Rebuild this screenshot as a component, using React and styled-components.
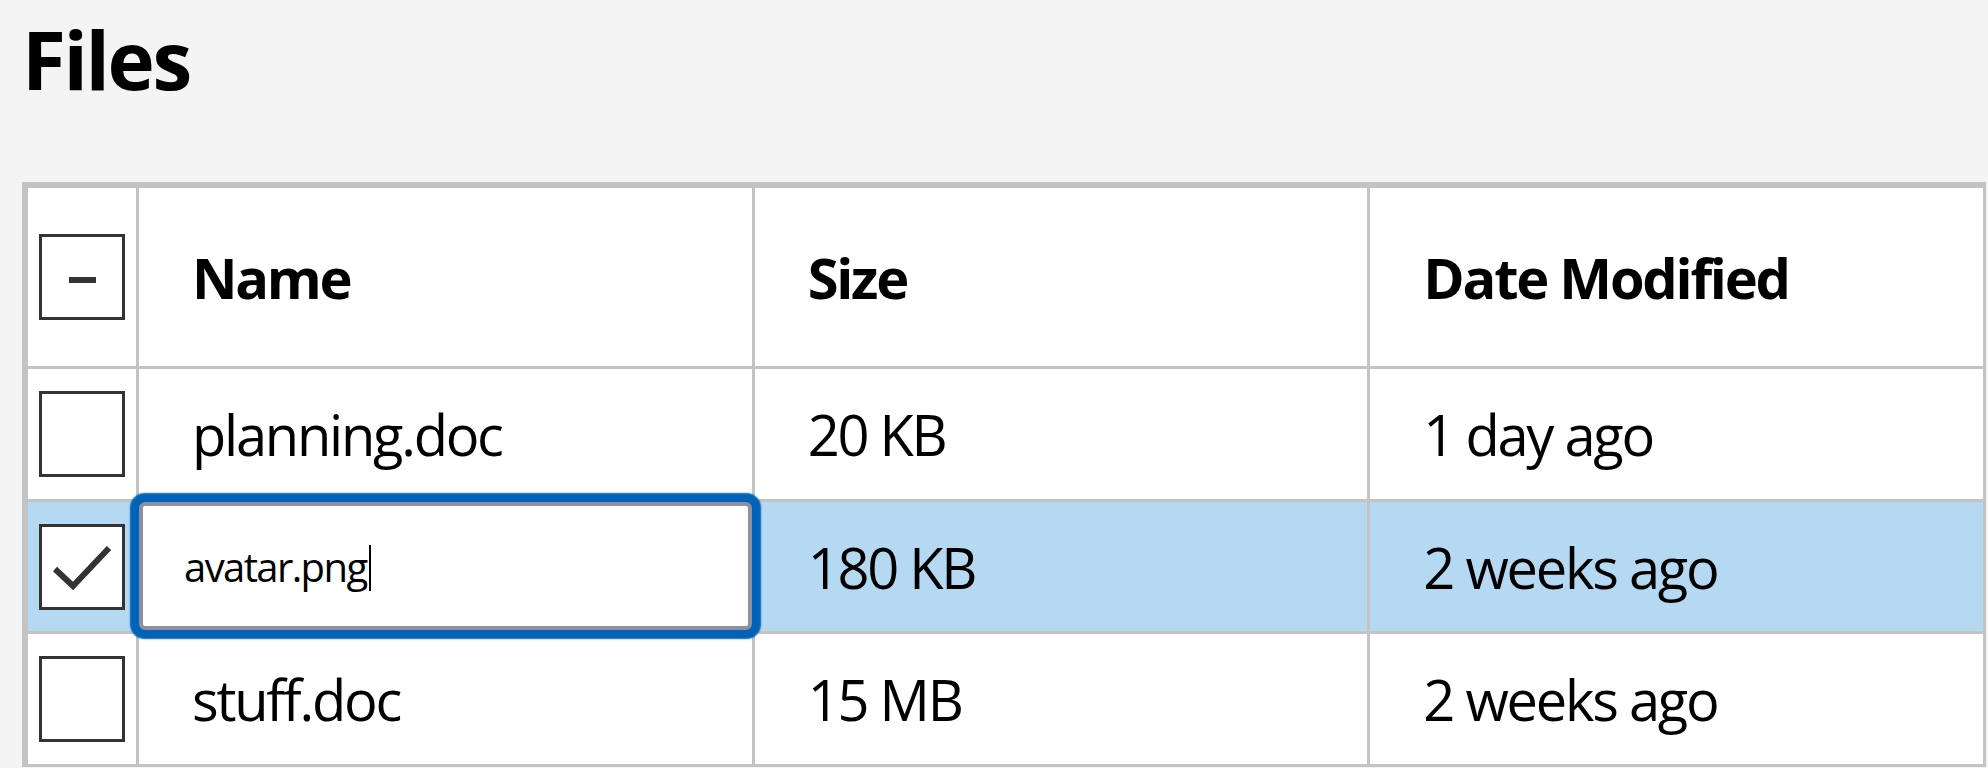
import React from 'react';
import styled, { createGlobalStyle } from 'styled-components';

const GlobalStyle = createGlobalStyle`
  html, body {
    margin: 0;
    padding: 0;
    background: #f4f4f4;
  }
  body {
    font-family: "Open Sans", "Noto Sans", sans-serif;
    color: #000;
  }
`;

const Page = styled.div`
  height: 768px;
  padding: 0 2px 0 22px;
  box-sizing: border-box;
  overflow: hidden;
`;

const Title = styled.h1`
  margin: 0;
  height: 182px;
  padding-top: 19px;
  box-sizing: border-box;
  font-size: 80px;
  line-height: 80px;
  font-weight: 700;
  letter-spacing: -0.03em;
`;

const Table = styled.div`
  display: flex;
  flex-direction: column;
  border: 3px solid #c3c3c3;
  background: #fff;
`;

const Row = styled.div`
  display: grid;
  grid-template-columns: 111px 1fr 1fr 1fr;
  height: ${(p) => p.$h}px;
  background: ${(p) => (p.$selected ? '#b5d9f3' : '#fff')};
`;

const Cell = styled.div`
  display: flex;
  align-items: center;
  box-sizing: border-box;
  min-width: 0;
  padding-left: 53px;
  border-left: 3px solid #c3c3c3;
  border-top: 3px solid #c3c3c3;
  font-size: 56px;
  font-weight: ${(p) => (p.$head ? 700 : 400)};
  letter-spacing: -0.04em;
  white-space: nowrap;
`;

const CheckCell = styled(Cell)`
  justify-content: center;
  padding-left: 0;
`;

const EditCell = styled(Cell)`
  align-items: stretch;
  padding-left: 0;
  padding-bottom: 1px;
`;

const Box = styled.div`
  width: 86px;
  height: 86px;
  box-sizing: border-box;
  border: 3px solid #333;
  background: #fff;
  display: flex;
  align-items: center;
  justify-content: center;
`;

const EditBox = styled.div`
  position: relative;
  z-index: 1;
  flex: 1;
  display: flex;
  align-items: center;
  padding-left: 41px;
  border: 4px solid #8f8f9d;
  border-radius: 6px;
  background: #fff;
  box-shadow: 0 0 1.5px 9px #0063b8;
  font-size: 40px;
  letter-spacing: -0.04em;
`;

const Caret = styled.span`
  display: inline-block;
  width: 2px;
  height: 46px;
  margin-left: 2px;
  background: #000;
  transform: translateY(2px);
`;

function Checkbox({ state }) {
  return (
    <Box>
      {state === 'checked' && (
        <svg width="80" height="80" viewBox="0 0 80 80">
          <polyline points="13,42 31,59 67,21" fill="none" stroke="#333" strokeWidth="6" />
        </svg>
      )}
      {state === 'mixed' && (
        <svg width="80" height="80" viewBox="0 0 80 80">
          <rect x="27" y="40" width="27" height="6" fill="#333" />
        </svg>
      )}
    </Box>
  );
}

const files = [
  { name: 'planning.doc', size: '20 KB', date: '1 day ago', h: 133 },
  { name: 'avatar.png', size: '180 KB', date: '2 weeks ago', h: 132, selected: true, editing: true },
  { name: 'stuff.doc', size: '15 MB', date: '2 weeks ago', h: 133 },
];

export default function App() {
  return (
    <>
      <GlobalStyle />
      <Page>
        <Title>Files</Title>
        <Table>
          <Row $h={181}>
            <CheckCell>
              <Checkbox state="mixed" />
            </CheckCell>
            <Cell $head>Name</Cell>
            <Cell $head>Size</Cell>
            <Cell $head>Date Modified</Cell>
          </Row>
          {files.map((f) => (
            <Row key={f.name} $h={f.h} $selected={f.selected}>
              <CheckCell>
                <Checkbox state={f.selected ? 'checked' : 'none'} />
              </CheckCell>
              {f.editing ? (
                <EditCell>
                  <EditBox>
                    {f.name}
                    <Caret />
                  </EditBox>
                </EditCell>
              ) : (
                <Cell>{f.name}</Cell>
              )}
              <Cell>{f.size}</Cell>
              <Cell>{f.date}</Cell>
            </Row>
          ))}
        </Table>
      </Page>
    </>
  );
}
